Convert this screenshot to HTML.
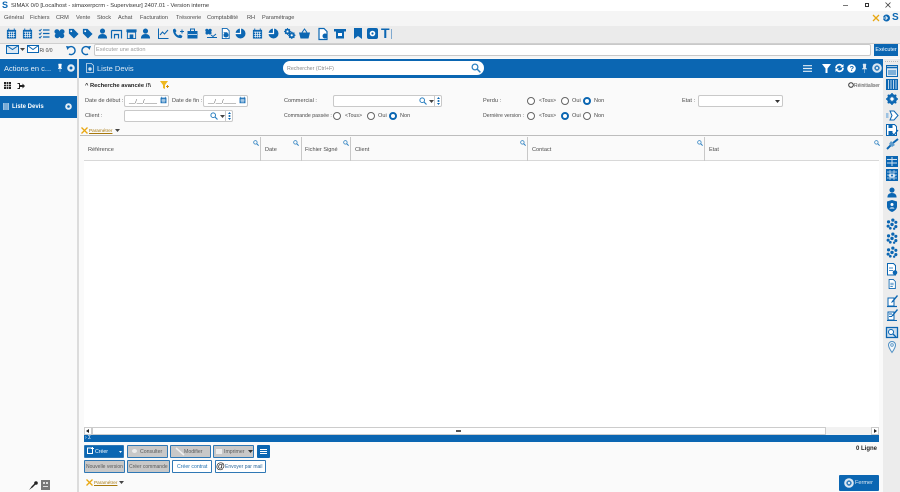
<!DOCTYPE html>
<html lang="fr"><head><meta charset="utf-8"><title>SIMAX</title>
<style>
html,body{margin:0;padding:0;width:900px;height:492px;overflow:hidden;background:#fafafa;font-family:"Liberation Sans",sans-serif;color:#333}
.a{position:absolute}
.t{position:absolute;white-space:nowrap;font-size:5.6px;line-height:8px;color:#4a4a4a}
svg{position:absolute;overflow:visible}
.inp{position:absolute;background:#fff;border:1px solid #c9c9c9;border-radius:2px;box-sizing:border-box}
.r{position:absolute;width:8px;height:8px;border:1px solid #666;border-radius:50%;box-sizing:border-box;background:#fff}
.r.on{border:2.5px solid #0b66b2;background:#fff}
.h{position:absolute;top:137px;height:24px;width:1px;background:#c8c8c8}
.btn{position:absolute;box-sizing:border-box;height:13px;border:1px solid #2f78b5;border-radius:1px;background:#c8c8c8;font-size:5.2px;line-height:12px;color:#5a5a5a;white-space:nowrap;text-align:left}
.btn.w{background:#fff;color:#1f6fb0}
</style></head><body>
<svg width="0" height="0"><defs>
<symbol id="mag" viewBox="0 0 8 8"><circle cx="3.2" cy="3.2" r="2.3" fill="none" stroke="#2a7fc0" stroke-width="1"/><path d="M5 5l2.5 2.5" stroke="#2a7fc0" stroke-width="1.2"/></symbol>
<symbol id="cal" viewBox="0 0 12 12"><path d="M1 2h10v9.500H1z" fill="#0b66b2"/><path d="M3 .5v2M9 .5v2" stroke="#0b66b2"/><path d="M2 4.500h8M2 7h8M2 9.300h8M4 4v6.500M6 4v6.500M8 4v6.500" stroke="#fff" stroke-width=".7"/></symbol>
<symbol id="pers" viewBox="0 0 12 12"><circle cx="6" cy="3.300" r="2.800" fill="#0b66b2"/><path d="M1 11.500c0-3.500 2-5 5-5s5 1.500 5 5z" fill="#0b66b2"/></symbol>
<symbol id="gear" viewBox="0 0 12 12"><circle cx="6" cy="6" r="3.800" fill="none" stroke="#0b66b2" stroke-width="2.400"/><path d="M6 0v12M0 6h12M1.800 1.800l8.400 8.400M10.200 1.800l-8.400 8.400" stroke="#0b66b2" stroke-width="1.500"/><circle cx="6" cy="6" r="1.700" fill="#fff"/></symbol>
<symbol id="doc" viewBox="0 0 12 12"><path d="M2.500 .5h5l2.500 2.500v8.500H2.500z" fill="#fff" stroke="#0b66b2"/><path d="M4 5h4M4 7h4M4 9h3" stroke="#0b66b2" stroke-width=".8"/></symbol>
<symbol id="tag" viewBox="0 0 12 12"><path d="M1 1h5l5.500 5.500-5 5L1 6z" fill="#0b66b2"/><circle cx="3.500" cy="3.500" r="1" fill="#fff"/></symbol>
<symbol id="shop" viewBox="0 0 12 12"><path d="M.5 1.500h11v3H.500z" fill="#0b66b2"/><path d="M1.500 4.500h9v7h-9z" fill="none" stroke="#0b66b2"/><path d="M4 7h4v4.500H4z" fill="#0b66b2"/></symbol>
<symbol id="paw" viewBox="0 0 12 12"><circle cx="3.200" cy="4" r="2.700" fill="#0b66b2"/><circle cx="8.800" cy="4" r="2.700" fill="#0b66b2"/><circle cx="3.500" cy="8.500" r="2.700" fill="#0b66b2"/><circle cx="8.500" cy="8.500" r="2.700" fill="#0b66b2"/><circle cx="6" cy="6" r="2.500" fill="#0b66b2"/></symbol>
<symbol id="clu" viewBox="0 0 14 14"><g fill="#0b66b2"><circle cx="3" cy="4.500" r="1.900"/><circle cx="8" cy="2.500" r="1.900"/><circle cx="11.500" cy="5" r="1.800"/><circle cx="2.500" cy="9.500" r="1.800"/><circle cx="7" cy="7.500" r="2"/><circle cx="11.500" cy="10" r="1.800"/><circle cx="5" cy="12" r="1.600"/><circle cx="9.500" cy="12.500" r="1.400"/></g></symbol>
</defs></svg>

<!-- title bar -->
<div class="a" style="left:0;top:0;width:900px;height:11px;background:#fff"></div>
<div class="t" style="left:2px;top:0;font-size:9px;font-weight:bold;color:#0b66b2;line-height:11px">S</div>
<div class="t" style="left:11px;top:2px;color:#333;font-size:5.800px">SIMAX 0/0 [Localhost - simaxerpcrm - Superviseur] 2407.01 - Version interne</div>
<div class="a" style="left:843px;top:5px;width:5px;height:1px;background:#777"></div>
<div class="a" style="left:865px;top:3px;width:4px;height:4px;border:1px solid #333;box-sizing:border-box"></div>
<svg style="left:885px;top:2px" width="6" height="6"><path d="M.5.500l5 5M5.500.500l-5 5" stroke="#444" stroke-width=".8"/></svg>

<!-- menu -->
<div class="a" style="left:0;top:11px;width:900px;height:15px;background:#f5f5f5"></div>
<div class="t" style="left:4px;top:14px">Général</div>
<div class="t" style="left:30px;top:14px">Fichiers</div>
<div class="t" style="left:56px;top:14px">CRM</div>
<div class="t" style="left:76px;top:14px">Vente</div>
<div class="t" style="left:97px;top:14px">Stock</div>
<div class="t" style="left:118px;top:14px">Achat</div>
<div class="t" style="left:140px;top:14px">Facturation</div>
<div class="t" style="left:176px;top:14px">Trésorerie</div>
<div class="t" style="left:207px;top:14px">Comptabilité</div>
<div class="t" style="left:247px;top:14px">RH</div>
<div class="t" style="left:262px;top:14px">Paramétrage</div>
<svg style="left:872px;top:14px" width="8" height="8"><path d="M1 1l6 6M7 1L1 7" stroke="#e8a712" stroke-width="1.300"/></svg>
<svg style="left:882px;top:14px" width="8" height="8"><circle cx="4.500" cy="4" r="3.500" fill="#0b66b2"/><path d="M0 4h5M3.500 2l2 2-2 2" stroke="#fff" stroke-width=".8" fill="none"/></svg>
<div class="t" style="left:892px;top:12px;font-size:10px;font-weight:bold;color:#0b66b2;line-height:12px">S</div>

<!-- toolbar -->
<div class="a" style="left:0;top:26px;width:900px;height:18px;background:#ebebeb;border-bottom:1px solid #cfcfcf;box-sizing:border-box"></div>
<svg style="left:6px;top:28px" width="11" height="11"><use href="#cal" width="11" height="11"/></svg>
<svg style="left:22px;top:28px" width="11" height="11"><use href="#cal" width="11" height="11"/></svg>
<svg style="left:39px;top:28px" width="11" height="11"><path d="M0 2l1 1 1.500-2M0 5.500l1 1 1.500-2M0 9l1 1 1.500-2" stroke="#0b66b2" fill="none"/><path d="M4 2h6.500M4 5.500h6.500M4 9h6.500" stroke="#0b66b2" stroke-width="1.300"/></svg>
<svg style="left:54px;top:28px" width="11" height="11"><use href="#paw" width="11" height="11"/></svg>
<svg style="left:68px;top:28px" width="11" height="11"><use href="#tag" width="11" height="11"/></svg>
<svg style="left:82px;top:28px" width="11" height="11"><use href="#tag" width="11" height="11"/></svg>
<svg style="left:97px;top:28px" width="11" height="11"><use href="#pers" width="11" height="11"/></svg>
<svg style="left:111px;top:28px" width="11" height="11"><path d="M.5 2.500h10v8M.500 2.500v8M3.500 10.500v-4h4v4" stroke="#0b66b2" stroke-width="1.200" fill="none"/></svg>
<svg style="left:126px;top:28px" width="11" height="11"><use href="#shop" width="11" height="11"/></svg>
<svg style="left:140px;top:28px" width="11" height="11"><use href="#pers" width="11" height="11"/></svg>
<svg style="left:158px;top:28px" width="11" height="11"><path d="M.5.500v10h10M2 7l2.500-3 2 2L10 2" stroke="#0b66b2" fill="none"/></svg>
<svg style="left:172px;top:28px" width="12" height="11"><path d="M1 1.500l2-1 1.500 2.500-1 1.500c.5 1.500 1.500 2.500 3 3l1.500-1 2.500 1.500-1 2C5 11 .500 6 1 1.500z" fill="#0b66b2"/><path d="M8 3.500h4M10 1.500v4" stroke="#0b66b2"/></svg>
<svg style="left:187px;top:28px" width="11" height="11"><path d="M.5 3h10v7.500H.500z" fill="#0b66b2"/><path d="M3.500 3V1h4v2" fill="none" stroke="#0b66b2"/><path d="M1 6.500h9" stroke="#fff" stroke-width=".7"/></svg>
<svg style="left:205px;top:28px" width="12" height="11"><use href="#paw" width="7" height="7"/><path d="M2 9.500h10M6 7l2 1.500L11 6" stroke="#0b66b2" fill="none"/></svg>
<svg style="left:220px;top:28px" width="11" height="11"><use href="#doc" width="11" height="11"/><circle cx="6" cy="7" r="2.500" fill="#0b66b2"/></svg>
<svg style="left:235px;top:28px" width="11" height="11"><circle cx="5.500" cy="5.500" r="5" fill="#0b66b2"/><path d="M.5 5.500h5v-5" stroke="#fff" stroke-width="1.200" fill="none"/></svg>
<svg style="left:252px;top:28px" width="11" height="11"><use href="#cal" width="11" height="11"/></svg>
<svg style="left:268px;top:28px" width="11" height="11"><circle cx="5.500" cy="5.500" r="5" fill="#0b66b2"/><path d="M.5 5.500h5v-5" stroke="#fff" stroke-width="1.200" fill="none"/></svg>
<svg style="left:284px;top:28px" width="11" height="11"><use href="#gear" width="7" height="7"/><use href="#gear" x="4" y="3.500" width="7.500" height="7.500"/></svg>
<svg style="left:299px;top:28px" width="11" height="11"><path d="M0 4.500h11l-1.500 6h-8z" fill="#0b66b2"/><path d="M3 4.500L5.500 1 8 4.500" stroke="#0b66b2" fill="none"/></svg>
<svg style="left:318px;top:28px" width="10" height="12"><path d="M1 .5h5l3 3v8H1z" fill="#fff" stroke="#0b66b2" stroke-width="1.200"/><circle cx="7" cy="8" r="2.500" fill="#0b66b2"/></svg>
<svg style="left:334px;top:28px" width="12" height="11"><path d="M0 1h12v2.500H0z" fill="#0b66b2"/><path d="M2 3.500h8v7H2z" fill="#0b66b2"/><path d="M4 5h4v3H4z" fill="#fff"/></svg>
<svg style="left:354px;top:28px" width="8" height="11"><path d="M0 0h8v11L4 8 0 11z" fill="#0b66b2"/></svg>
<svg style="left:367px;top:28px" width="11" height="11"><rect width="11" height="11" rx="2" fill="#0b66b2"/><circle cx="5.500" cy="5.500" r="2.800" fill="#fff"/><circle cx="5.500" cy="5.500" r="1.100" fill="#0b66b2"/></svg>
<div class="t" style="left:381px;top:27px;font-size:14px;font-weight:bold;color:#0b66b2;line-height:13px">T</div>
<div class="a" style="left:391px;top:29px;width:1px;height:10px;background:#7fa9cf"></div>

<!-- action bar -->
<div class="a" style="left:0;top:44px;width:900px;height:14px;background:#f5f5f5"></div>
<svg style="left:6px;top:44px" width="13" height="11"><path d="M.5 1.500h12v8H.500z" fill="#dce9f4" stroke="#0b66b2"/><path d="M.5 1.500l6 4 6-4" fill="none" stroke="#0b66b2"/></svg>
<svg style="left:20px;top:48px" width="5" height="3"><path d="M0 0h5L2.500 3z" fill="#444"/></svg>
<svg style="left:27px;top:45px" width="12" height="9"><path d="M.5.500h11v7H.500z" fill="#fff" stroke="#0b66b2"/><path d="M.5.500l5.500 4 5.500-4" fill="none" stroke="#0b66b2"/></svg>
<div class="t" style="left:39.500px;top:47px;font-size:5px">Ri 0/0</div>
<svg style="left:66px;top:45px" width="11" height="11"><path d="M2.500 2.500A4 4 0 1 1 3 9" fill="none" stroke="#0b66b2" stroke-width="1.400"/><path d="M0 1l4 .5L1.500 5z" fill="#0b66b2"/></svg>
<svg style="left:80px;top:45px" width="11" height="11"><path d="M8.500 2.500A4 4 0 1 0 8 9" fill="none" stroke="#0b66b2" stroke-width="1.400"/><path d="M11 1l-4 .5L9.500 5z" fill="#0b66b2"/></svg>
<div class="inp" style="left:94px;top:44px;width:777px;height:12px"></div>
<div class="t" style="left:96px;top:46px;color:#999">Exécuter une action</div>
<div class="a" style="left:874px;top:44px;width:24px;height:12px;background:#0b66b2;color:#fff;font-size:5.400px;line-height:12px;text-align:center">Exécuter</div>

<!-- left panel -->
<div class="a" style="left:0;top:59px;width:78px;height:433px;background:#fafafa"></div>
<div class="a" style="left:77px;top:59px;width:2px;height:433px;background:#dcdcdc"></div>
<div class="a" style="left:0;top:59px;width:77px;height:19px;background:#0b66b2"></div>
<div class="t" style="left:4px;top:63.500px;color:#eaf1f7;font-size:7.500px;line-height:10px">Actions en c...</div>
<svg style="left:58px;top:64px" width="4" height="8"><path d="M.5 0h3L3 3.500l1 1H0l1-1zM2 4.500V8" fill="#fff" stroke="#fff" stroke-width=".5"/></svg>
<svg style="left:67px;top:64px" width="8" height="8"><circle cx="4" cy="4" r="3.800" fill="#e4eef6"/><circle cx="4" cy="4" r="1.500" fill="#0b66b2"/></svg>
<svg style="left:4px;top:82px" width="7" height="7"><path d="M0 0h7v7H0z" fill="#222"/><path d="M2.300 0v7M4.700 0v7M0 2.300h7M0 4.700h7" stroke="#fff" stroke-width=".6"/></svg>
<svg style="left:17px;top:83px" width="8" height="6"><path d="M.5.500h2v5h-2" fill="none" stroke="#222"/><path d="M3 2h2.500V.500L8 3 5.500 5.500V4H3z" fill="#222"/></svg>
<div class="a" style="left:0;top:96px;width:77px;height:22px;background:#0b66b2"></div>
<svg style="left:3px;top:103px" width="6" height="7"><path d="M0 0h6v7H0z" fill="#9cc2e2"/><path d="M2 0v7M4 0v7" stroke="#0b66b2" stroke-width=".5"/></svg>
<div class="t" style="left:12px;top:102.500px;color:#fff;font-size:6px;font-weight:bold">Liste Devis</div>
<svg style="left:65px;top:103px" width="7" height="7"><circle cx="3.500" cy="3.500" r="3.300" fill="#e4eef6"/><circle cx="3.500" cy="3.500" r="1.300" fill="#0b66b2"/></svg>
<svg style="left:29px;top:481px" width="9" height="9"><path d="M8 1L3 6" stroke="#222" stroke-width="1.500"/><path d="M0 9l3-4 1 1z" fill="#222"/><circle cx="7" cy="2" r="1.800" fill="#222"/></svg>
<svg style="left:41px;top:480px" width="9" height="10"><path d="M0 0h9v10H0z" fill="#777"/><path d="M2 2h2v2H2zM5 2h2v2H5zM2 6h5v1H2z" fill="#ddd"/></svg>

<!-- main header -->
<div class="a" style="left:79px;top:59px;width:804px;height:19px;background:#0b66b2"></div>
<svg style="left:86px;top:63px" width="8" height="10"><path d="M.5.500h5l2 2v7h-7z" fill="none" stroke="#cfe0ef" stroke-width=".8"/><circle cx="4" cy="6" r="1.700" fill="#cfe0ef"/></svg>
<div class="t" style="left:97px;top:63.500px;color:#dfeaf4;font-size:7.500px;line-height:10px">Liste Devis</div>
<div class="a" style="left:283px;top:61px;width:201px;height:14px;background:#fff;border-radius:7px"></div>
<div class="t" style="left:287px;top:64.500px;color:#888;font-size:5.300px">Rechercher (Ctrl+F)</div>
<svg style="left:471px;top:63px" width="10" height="10"><use href="#mag" width="10" height="10"/></svg>
<svg style="left:803px;top:65px" width="9" height="7"><path d="M0 .7h9M0 3.500h9M0 6.300h9" stroke="#e4eef6" stroke-width="1.200"/></svg>
<svg style="left:822px;top:64px" width="9" height="9"><path d="M0 0h9L5.500 4.500V9h-2V4.500z" fill="#fff"/></svg>
<svg style="left:835px;top:64px" width="9" height="8"><path d="M1 4a3.500 3.500 0 0 1 6-2.300M8 4a3.500 3.500 0 0 1-6 2.300" fill="none" stroke="#fff" stroke-width="1.700"/><path d="M8.500 0v3.500H5zM.5 8V4.500H4z" fill="#fff"/></svg>
<svg style="left:847px;top:64px" width="9" height="9"><circle cx="4.500" cy="4.500" r="4.300" fill="#fff"/></svg>
<div class="t" style="left:849.500px;top:64.500px;color:#0b66b2;font-size:7.500px;line-height:8px;font-weight:bold">?</div>
<svg style="left:862px;top:64px" width="5" height="9"><path d="M1 0h3l-.5 4 1.500 1H0l1.500-1zM2.500 5v4" fill="#dde8f2" stroke="#dde8f2" stroke-width=".5"/></svg>
<svg style="left:872px;top:63px" width="10" height="10"><circle cx="5" cy="5" r="4.800" fill="#dde8f2"/><circle cx="5" cy="5" r="2.600" fill="#0b66b2"/><path d="M3.700 3.700l2.600 2.600M6.300 3.700L3.700 6.300" stroke="#fff" stroke-width=".8"/></svg>

<!-- filters -->
<div class="t" style="left:85px;top:82px;color:#222;font-size:5.800px;font-weight:bold">^ Recherche avancée /!\</div>
<svg style="left:160px;top:81px" width="9" height="9"><path d="M0 0h8L5 4v4l-2-1V4z" fill="#eeb820"/><path d="M6 5.500h3M7.500 4v3" stroke="#d6920c"/></svg>
<svg style="left:848px;top:82px" width="6" height="6"><circle cx="3" cy="3" r="2.300" fill="none" stroke="#333"/></svg>
<div class="t" style="left:854px;top:82px;font-size:5px">Réinitialiser</div>

<div class="t" style="left:85px;top:97px">Date de début :</div>
<div class="inp" style="left:124px;top:95px;width:45px;height:12px"></div>
<div class="t" style="left:129px;top:97.500px">__/__/____</div>
<svg style="left:160px;top:96px" width="7" height="8"><use href="#cal" width="7" height="8"/></svg>
<div class="t" style="left:172px;top:97px">Date de fin :</div>
<div class="inp" style="left:203px;top:95px;width:45px;height:12px"></div>
<div class="t" style="left:208px;top:97.500px">__/__/____</div>
<svg style="left:239px;top:96px" width="7" height="8"><use href="#cal" width="7" height="8"/></svg>
<div class="t" style="left:85px;top:112px">Client :</div>
<div class="inp" style="left:124px;top:110px;width:109px;height:12px"></div>
<svg style="left:210px;top:112px" width="8" height="8"><use href="#mag" width="8" height="8"/></svg>
<svg style="left:220px;top:115px" width="5" height="3"><path d="M0 0h5L2.500 3z" fill="#444"/></svg>
<div class="a" style="left:225px;top:110px;width:1px;height:12px;background:#c9c9c9"></div>
<svg style="left:228px;top:112px" width="3" height="8"><path d="M1.500 0L3 2H0zM1.500 8L3 6H0z" fill="#0b66b2"/><circle cx="1.500" cy="4" r="1" fill="#0b66b2"/></svg>

<div class="t" style="left:284px;top:97px">Commercial :</div>
<div class="inp" style="left:333px;top:95px;width:109px;height:12px"></div>
<svg style="left:419px;top:97px" width="8" height="8"><use href="#mag" width="8" height="8"/></svg>
<svg style="left:429px;top:100px" width="5" height="3"><path d="M0 0h5L2.500 3z" fill="#444"/></svg>
<div class="a" style="left:434px;top:95px;width:1px;height:12px;background:#c9c9c9"></div>
<svg style="left:437px;top:97px" width="3" height="8"><path d="M1.500 0L3 2H0zM1.500 8L3 6H0z" fill="#0b66b2"/><circle cx="1.500" cy="4" r="1" fill="#0b66b2"/></svg>

<div class="t" style="left:284px;top:112px;font-size:5.200px">Commande passée :</div>
<div class="r" style="left:333px;top:112px"></div><div class="t" style="left:345px;top:112px;font-size:5.200px">&lt;Tous&gt;</div>
<div class="r" style="left:367px;top:112px"></div><div class="t" style="left:378px;top:112px">Oui</div>
<div class="r on" style="left:389px;top:112px"></div><div class="t" style="left:400px;top:112px">Non</div>

<div class="t" style="left:483px;top:97px">Perdu :</div>
<div class="r" style="left:527px;top:97px"></div><div class="t" style="left:539px;top:97px;font-size:5.200px">&lt;Tous&gt;</div>
<div class="r" style="left:561px;top:97px"></div><div class="t" style="left:572px;top:97px">Oui</div>
<div class="r on" style="left:583px;top:97px"></div><div class="t" style="left:594px;top:97px">Non</div>
<div class="t" style="left:483px;top:112px;font-size:5.200px">Dernière version :</div>
<div class="r" style="left:527px;top:112px"></div><div class="t" style="left:539px;top:112px;font-size:5.200px">&lt;Tous&gt;</div>
<div class="r on" style="left:561px;top:112px"></div><div class="t" style="left:572px;top:112px">Oui</div>
<div class="r" style="left:583px;top:112px"></div><div class="t" style="left:594px;top:112px">Non</div>

<div class="t" style="left:682px;top:97px">Etat :</div>
<div class="inp" style="left:698px;top:95px;width:85px;height:12px"></div>
<svg style="left:775px;top:100px" width="5" height="3"><path d="M0 0h5L2.500 3z" fill="#333"/></svg>

<svg style="left:81px;top:127px" width="7" height="7"><path d="M.5.500l6 6M6.500.500l-6 6" stroke="#e8a712" stroke-width="1.300"/></svg>
<div class="t" style="left:89px;top:127px;color:#a8780c;text-decoration:underline;font-size:4.700px">Paramétrer</div>
<svg style="left:115px;top:129px" width="5" height="3"><path d="M0 0h5L2.500 3z" fill="#444"/></svg>

<!-- grid -->
<div class="a" style="left:80px;top:135px;width:803px;height:1px;background:#bdbdbd"></div>
<div class="a" style="left:84px;top:161px;width:795px;height:266px;background:#fff"></div>
<div class="a" style="left:84px;top:160px;width:795px;height:1px;background:#d8d8d8"></div>
<div class="h" style="left:260px"></div><div class="h" style="left:301px"></div><div class="h" style="left:350px"></div><div class="h" style="left:527px"></div><div class="h" style="left:704px"></div>
<div class="t" style="left:88px;top:146px">Référence</div>
<div class="t" style="left:265px;top:146px">Date</div>
<div class="t" style="left:305px;top:146px">Fichier Signé</div>
<div class="t" style="left:355px;top:146px">Client</div>
<div class="t" style="left:532px;top:146px">Contact</div>
<div class="t" style="left:709px;top:146px">Etat</div>
<svg style="left:253px;top:140px" width="6" height="6"><use href="#mag" width="6" height="6"/></svg>
<svg style="left:293px;top:140px" width="6" height="6"><use href="#mag" width="6" height="6"/></svg>
<svg style="left:343px;top:140px" width="6" height="6"><use href="#mag" width="6" height="6"/></svg>
<svg style="left:520px;top:140px" width="6" height="6"><use href="#mag" width="6" height="6"/></svg>
<svg style="left:697px;top:140px" width="6" height="6"><use href="#mag" width="6" height="6"/></svg>
<svg style="left:874px;top:140px" width="6" height="6"><use href="#mag" width="6" height="6"/></svg>

<!-- scrollbar -->
<div class="a" style="left:84px;top:427px;width:795px;height:8px;background:#f2f2f2"></div>
<div class="a" style="left:92px;top:427px;width:734px;height:8px;background:#fff;border:1px solid #ccc;box-sizing:border-box"></div>
<div class="a" style="left:84px;top:427px;width:8px;height:8px;background:#fff;border:1px solid #ccc;box-sizing:border-box"></div>
<svg style="left:86px;top:429px" width="3" height="4"><path d="M3 0v4L0 2z" fill="#222"/></svg>
<div class="a" style="left:871px;top:427px;width:8px;height:8px;background:#fff;border:1px solid #ccc;box-sizing:border-box"></div>
<svg style="left:874px;top:429px" width="3" height="4"><path d="M0 0v4l3-2z" fill="#222"/></svg>
<div class="a" style="left:456px;top:430px;width:5px;height:2px;background:#555"></div>
<div class="a" style="left:84px;top:435px;width:795px;height:7px;background:#0b66b2"></div>
<div class="t" style="left:85px;top:435px;color:#fff;line-height:7px;font-size:5px">› Σ</div>

<!-- buttons -->
<div class="btn" style="left:84px;top:445px;width:40px;background:#0b66b2;color:#fff;padding-left:10px">Créer</div>
<svg style="left:87px;top:447px" width="7" height="7"><path d="M.5 1h5v5.500H.500z" fill="none" stroke="#fff"/><path d="M4 1.500h3M5.500 0v3" stroke="#fff"/></svg>
<svg style="left:119px;top:451px" width="3" height="2"><path d="M0 0h3L1.500 2z" fill="#fff"/></svg>
<div class="btn" style="left:127px;top:445px;width:41px;padding-left:12px">Consulter</div>
<div class="a" style="left:132px;top:449px;width:5px;height:4px;background:#ececec;border-radius:50%"></div>
<div class="btn" style="left:170px;top:445px;width:41px;padding-left:13px">Modifier</div>
<svg style="left:176px;top:448px" width="8" height="7"><path d="M0 0l8 7" stroke="#f0f0f0" stroke-width="1.500"/></svg>
<div class="btn" style="left:213px;top:445px;width:41px;padding-left:10px">Imprimer</div>
<div class="a" style="left:216px;top:449px;width:6px;height:5px;background:#ececec"></div>
<svg style="left:248px;top:450px" width="5" height="3"><path d="M0 0h5L2.500 3z" fill="#333"/></svg>
<div class="a" style="left:257px;top:445px;width:13px;height:13px;background:#0b66b2;border-radius:1px"></div>
<svg style="left:260px;top:449px" width="7" height="5"><path d="M0 .5h7M0 2.500h7M0 4.500h7" stroke="#fff"/></svg>
<div class="btn" style="left:84px;top:460px;width:41px;padding-left:1px;font-size:5px">Nouvelle version</div>
<div class="btn" style="left:127px;top:460px;width:43px;padding-left:1px;font-size:5px">Créer commande</div>
<div class="btn w" style="left:172px;top:460px;width:40px;padding-left:4px">Créer contrat</div>
<div class="btn w" style="left:215px;top:460px;width:51px;padding-left:9px;color:#2f6a9c;font-size:5px">Envoyer par mail</div>
<div class="t" style="left:216px;top:461px;font-size:9px;font-weight:bold;color:#222;line-height:10px">@</div>
<svg style="left:86px;top:479px" width="7" height="7"><path d="M.5.500l6 6M6.500.500l-6 6" stroke="#e8a712" stroke-width="1.300"/></svg>
<div class="t" style="left:94px;top:479px;color:#a8780c;text-decoration:underline;font-size:4.700px">Paramétrer</div>
<svg style="left:119px;top:481px" width="5" height="3"><path d="M0 0h5L2.500 3z" fill="#444"/></svg>
<div class="t" style="left:856px;top:445px;color:#222;font-weight:bold;font-size:6px">0 Ligne</div>
<div class="a" style="left:839px;top:475px;width:40px;height:16px;background:#0b66b2;border-radius:1px"></div>
<svg style="left:844px;top:478px" width="10" height="10"><circle cx="5" cy="5" r="4.800" fill="#dde8f2"/><circle cx="5" cy="5" r="2.600" fill="#0b66b2"/><path d="M3.700 3.700l2.600 2.600M6.300 3.700L3.700 6.300" stroke="#fff" stroke-width=".8"/></svg>
<div class="t" style="left:855px;top:479px;color:#dfeaf4">Fermer</div>

<!-- right rail -->
<div class="a" style="left:883px;top:59px;width:17px;height:433px;background:#ececec"></div>
<div class="a" style="left:885px;top:61px;width:13px;height:1px;background:repeating-linear-gradient(90deg,#bbb 0 1px,transparent 1px 2px)"></div>
<svg style="left:886px;top:65px" width="12" height="12"><path d="M.5.500h11v11H.500z" fill="#dbe8f3" stroke="#0b66b2"/><path d="M0 2.500h12" stroke="#0b66b2" stroke-width="1.500"/><path d="M2 5h8v5H2z" fill="#7fb0d8"/></svg>
<svg style="left:886px;top:79px" width="12" height="11"><path d="M0 0h12v11H0z" fill="#0b66b2"/><path d="M2.500 1v9M5 1v9M7.500 1v9M10 1v9" stroke="#bcd5ea"/></svg>
<svg style="left:886px;top:93px" width="12" height="12"><use href="#gear" width="12" height="12"/></svg>
<svg style="left:886px;top:110px" width="12" height="11"><path d="M0 3h2.500v5H0z" fill="#9cc2e2"/><path d="M4 1l4 0 4 4.500-4 4.500-4 0 2-4.500z" fill="#fff" stroke="#0b66b2"/></svg>
<svg style="left:886px;top:124px" width="12" height="12"><path d="M.5.500h8l2 2v9H.500z" fill="#fff" stroke="#0b66b2"/><path d="M2.500 1h4v3h-4zM2.500 7h4v4h-4z" fill="#0b66b2"/><path d="M6 9l2 2 4-5" stroke="#0b66b2" fill="none" stroke-width="1.200"/></svg>
<svg style="left:886px;top:138px" width="12" height="12"><path d="M12 1L7 5M1 11l5-5" stroke="#0b66b2" stroke-width="2"/><path d="M5 3l4 4-3 2-3-3z" fill="#5d9ccd"/></svg>
<svg style="left:886px;top:156px" width="12" height="11"><path d="M0 0h12v11H0z" fill="#0b66b2"/><path d="M1 3.500h10M1 7h10M6 1v9" stroke="#cfe0ef"/></svg>
<svg style="left:886px;top:169px" width="12" height="12"><path d="M0 0h12v12H0z" fill="#0b66b2"/><path d="M1 3h10M1 6h10M1 9h10M4 1v10M8 1v10" stroke="#cfe0ef" stroke-width=".7"/><ellipse cx="6" cy="6.500" rx="3.500" ry="2" fill="#dce9f4"/><circle cx="6" cy="6.500" r="1" fill="#0b66b2"/></svg>
<svg style="left:886px;top:187px" width="12" height="11"><use href="#pers" width="12" height="11"/></svg>
<svg style="left:887px;top:200px" width="10" height="12"><path d="M5 0l5 1.500v5C10 9 7.500 11 5 12 2.500 11 0 9 0 6.500v-5z" fill="#0b66b2"/><circle cx="5" cy="4.500" r="1.500" fill="#fff"/><path d="M2.500 8.500c.5-1.500 4.500-1.500 5 0z" fill="#fff"/></svg>
<svg style="left:886px;top:218px" width="12" height="12"><use href="#clu" width="12" height="12"/></svg>
<svg style="left:886px;top:232px" width="12" height="12"><use href="#clu" width="12" height="12"/></svg>
<svg style="left:886px;top:246px" width="12" height="12"><use href="#clu" width="12" height="12"/></svg>
<svg style="left:887px;top:263px" width="11" height="13"><path d="M.5.500h6l2 2v9.500H.500z" fill="#fff" stroke="#0b66b2"/><path d="M2 5h4M2 7.500h4" stroke="#0b66b2" stroke-width=".8"/><circle cx="8" cy="9.500" r="2.300" fill="#0b66b2"/></svg>
<svg style="left:887px;top:278px" width="10" height="12"><use href="#doc" width="10" height="12"/></svg>
<svg style="left:887px;top:295px" width="11" height="12"><path d="M1 3h6v8H1z" fill="#fff" stroke="#0b66b2"/><path d="M10 0L5 6l-1 2 2-1 5-6z" fill="#0b66b2"/><path d="M0 11.500h10" stroke="#0b66b2" stroke-width="1.200"/></svg>
<svg style="left:887px;top:309px" width="11" height="12"><path d="M1 3h6v8H1z" fill="#fff" stroke="#0b66b2"/><path d="M10 0L5 6l-1 2 2-1 5-6z" fill="#0b66b2"/><path d="M0 11.500h10M2 5h3M2 7.500h3" stroke="#0b66b2"/></svg>
<svg style="left:886px;top:327px" width="12" height="11"><path d="M.5.500h11v10H.500z" fill="#cfe0ef" stroke="#0b66b2" stroke-width="1.300"/><circle cx="5" cy="5" r="2.500" fill="#fff" stroke="#0b66b2"/><path d="M7 7l3 3" stroke="#0b66b2" stroke-width="1.300"/></svg>
<svg style="left:888px;top:341px" width="8" height="12"><path d="M4 11.500C2 8.500.5 6.500.5 4a3.500 3.500 0 0 1 7 0c0 2.500-1.500 4.500-3.500 7.500z" fill="#f4f8fb" stroke="#4f8fc3"/><circle cx="4" cy="4" r="1.300" fill="none" stroke="#4f8fc3" stroke-width=".8"/></svg>
</body></html>
